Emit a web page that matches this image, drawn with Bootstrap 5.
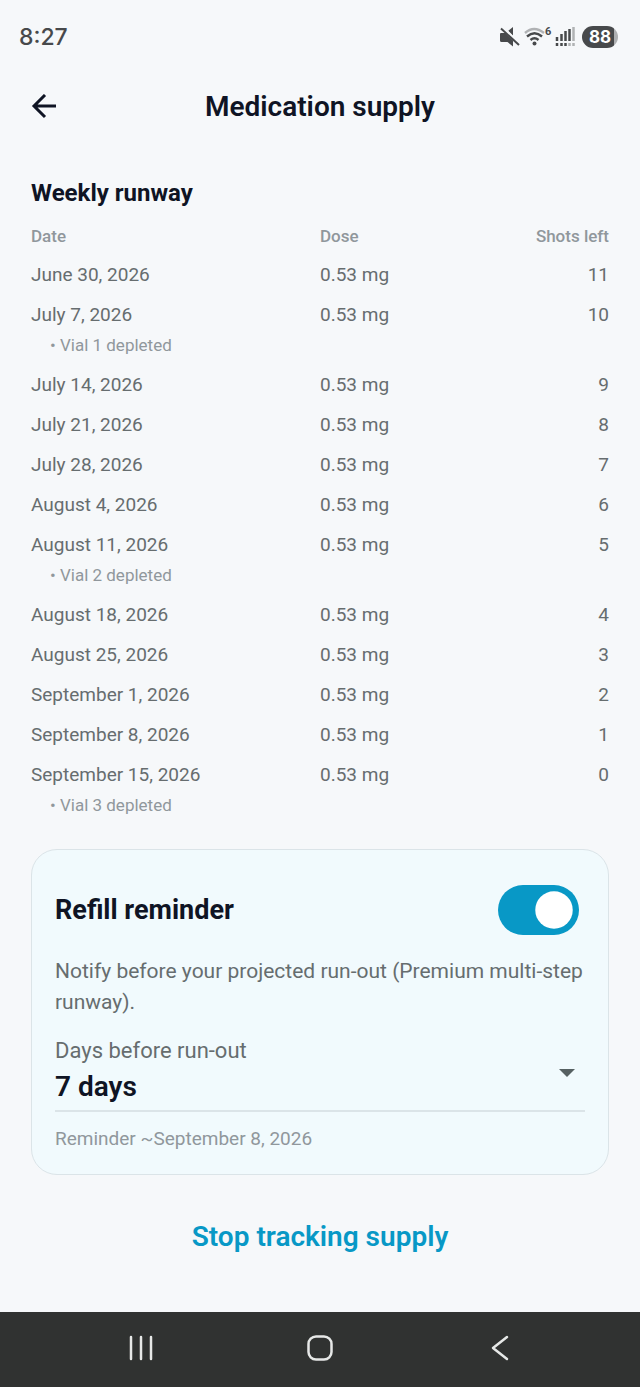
<!DOCTYPE html>
<html lang="en">
<head>
<meta charset="utf-8">
<meta name="viewport" content="width=device-width, initial-scale=1">
<title>Medication supply</title>
<link href="https://cdn.jsdelivr.net/npm/bootstrap@5.3.0/dist/css/bootstrap.min.css" rel="stylesheet">
<style>
  :root { --ink: #0f1424; --body: #666d6f; --faint: #90979c; --accent: #0898c6; --line: #dbe4e8; }
  body { font-family: Roboto, "Liberation Sans", sans-serif; background: #f6f8fa; color: var(--ink); }
  .status-bar { height: 74px; padding: 0 22px 0 19px; color: #47494b; }
  .clock { font: 500 23px/32px Inter, Roboto, sans-serif; }
  .status-icons { gap: 3px; }
  .wifi-gen { width: 7px; font: 700 11px/12px Roboto, sans-serif; }
  .battery { width: 36px; height: 22px; border-radius: 11px; font: 700 17px/22px Inter, Roboto, sans-serif;
             color: #fff; background: linear-gradient(90deg, #47494b 90%, #aeb0b2 90%); }
  .app-bar { display: grid; grid-template-columns: 48px 1fr 48px; height: 66px; padding: 0 20px; }
  .app-title, .stop-btn { font-size: 28px; line-height: 36px; font-weight: 600; }
  .content { padding: 36px 31px 0; }
  .section-title { font-size: 24px; line-height: 34px; font-weight: 700; }
  .runway { table-layout: fixed; }
  .runway th { height: 45px; font-size: 17px; font-weight: 500; color: var(--faint); }
  .runway td { height: 40px; font-size: 19px; line-height: 28px; color: var(--body); }
  .runway th, .runway td { padding: 0; vertical-align: middle; }
  .runway thead th { padding-top: 8px; }
  .runway .note td { height: 30px; padding: 0 0 10px 19px; font-size: 17px; line-height: 20px; color: var(--faint); }
  .refill { margin-top: 24px; padding: 35px 23px 22px; border: 1px solid var(--line); border-radius: 26px; background: #f1fafd; }
  .refill-title { font-size: 27px; line-height: 36px; font-weight: 700; }
  .form-switch .form-check-input.refill-toggle { width: 81px; height: 50px; margin: 0 6px 0 0; border: 0; border-radius: 25px; }
  .refill-toggle:checked { background-color: var(--accent); }
  .refill-text { margin-top: 21px; font-size: 21px; line-height: 31px; color: var(--body); }
  .days-field { margin-top: 20px; border-bottom: 2px solid var(--line); }
  .days-label { font-size: 22px; line-height: 26px; color: var(--body); }
  .days-select { appearance: none; background: none; border: 0; padding: 0; font-size: 28px; line-height: 46px; font-weight: 600; color: var(--ink); }
  .caret { right: 10px; top: 31px; pointer-events: none; }
  .reminder { margin-top: 14px; font-size: 19px; line-height: 26px; color: var(--faint); }
  .stop-btn { color: var(--accent); margin: 38px 0 42px; padding: 6px 16px; border: 0; }
  .sys-nav { height: 75px; padding: 0 50px 4px; background: #303231; }
  .sys-nav .btn { border: 0; }
</style>
</head>
<body>
<div class="d-flex flex-column min-vh-100">
  <div class="status-bar d-flex align-items-center justify-content-between">
    <span class="clock">8:27</span>
    <div class="status-icons d-flex align-items-center">
      <svg width="22" height="22" viewBox="0 0 22 22" fill="#47494b" aria-label="Muted"><path d="M2 7h5l7 7v6.500L8.500 16H2.500Q1 16 1 14.500V8q0-1 1-1zM9 5l5-4v9z"/><path d="M3 1l18 18" stroke="#f6f8fa" stroke-width="3.500"/><path d="M2 2.500l18 16.500" stroke="#47494b" stroke-width="2"/></svg>
      <div class="d-flex">
        <svg width="21" height="22" viewBox="0 0 21 22" fill="none" stroke="#47494b" stroke-width="2.400" aria-label="Wi-Fi"><path d="M1 7Q10-1 20 7" stroke="#b0b2b4"/><path d="M3 10.500q7.500-6.500 15 0M6.500 14q4-3.500 8 0"/><circle cx="10.500" cy="17.500" r="2" fill="#47494b" stroke="none"/></svg>
        <span class="wifi-gen">6</span>
      </div>
      <svg width="20" height="22" viewBox="0 0 20 22" fill="none" stroke-width="2.500" stroke="#47494b" aria-label="Signal"><path d="M2 11v4M6.500 8v7M10.500 5v10M14.500 3v12M2 17v3M6.500 17v3M10.500 17v3"/><path d="M18.500 1v14M14.500 17v3M18.500 17v3" stroke="#b0b2b4"/></svg>
      <span class="battery text-center ms-1">88</span>
    </div>
  </div>

  <header class="app-bar align-items-center">
    <button class="btn p-0 border-0 d-flex justify-content-center" type="button" aria-label="Back">
      <svg width="26" height="26" viewBox="0 0 26 26" fill="none" stroke="#0f1424" stroke-width="3"><path d="M14 1L3 12l11 11M3 12h22"/></svg>
    </button>
    <h1 class="app-title text-center m-0">Medication supply</h1>
  </header>

  <main class="content flex-grow-1">
    <h2 class="section-title m-0">Weekly runway</h2>
    <table class="runway w-100">
      <colgroup><col class="w-50"><col class="w-25"><col class="w-25"></colgroup>
      <thead><tr><th>Date</th><th>Dose</th><th class="text-end">Shots left</th></tr></thead>
      <tbody>
        <tr><td>June 30, 2026</td><td>0.53 mg</td><td class="text-end">11</td></tr>
        <tr><td>July 7, 2026</td><td>0.53 mg</td><td class="text-end">10</td></tr>
        <tr class="note"><td colspan="3">• Vial 1 depleted</td></tr>
        <tr><td>July 14, 2026</td><td>0.53 mg</td><td class="text-end">9</td></tr>
        <tr><td>July 21, 2026</td><td>0.53 mg</td><td class="text-end">8</td></tr>
        <tr><td>July 28, 2026</td><td>0.53 mg</td><td class="text-end">7</td></tr>
        <tr><td>August 4, 2026</td><td>0.53 mg</td><td class="text-end">6</td></tr>
        <tr><td>August 11, 2026</td><td>0.53 mg</td><td class="text-end">5</td></tr>
        <tr class="note"><td colspan="3">• Vial 2 depleted</td></tr>
        <tr><td>August 18, 2026</td><td>0.53 mg</td><td class="text-end">4</td></tr>
        <tr><td>August 25, 2026</td><td>0.53 mg</td><td class="text-end">3</td></tr>
        <tr><td>September 1, 2026</td><td>0.53 mg</td><td class="text-end">2</td></tr>
        <tr><td>September 8, 2026</td><td>0.53 mg</td><td class="text-end">1</td></tr>
        <tr><td>September 15, 2026</td><td>0.53 mg</td><td class="text-end">0</td></tr>
        <tr class="note"><td colspan="3">• Vial 3 depleted</td></tr>
      </tbody>
    </table>

    <section class="refill">
      <div class="form-check form-switch d-flex align-items-center justify-content-between p-0 m-0">
        <label class="refill-title" for="refill">Refill reminder</label>
        <input class="form-check-input refill-toggle" type="checkbox" role="switch" id="refill" checked>
      </div>
      <p class="refill-text mb-0">Notify before your projected run-out (Premium multi-step runway).</p>
      <div class="days-field position-relative">
        <label class="days-label d-block" for="days">Days before run-out</label>
        <select class="days-select d-block w-100" id="days"><option>7 days</option><option>14 days</option></select>
        <svg class="caret position-absolute" width="16" height="8" viewBox="0 0 16 8" fill="#566062" aria-hidden="true"><path d="M0 0h16L8 8z"/></svg>
      </div>
      <p class="reminder mb-0">Reminder ~September 8, 2026</p>
    </section>

    <div class="text-center">
      <button class="btn stop-btn" type="button">Stop tracking supply</button>
    </div>
  </main>

  <nav class="sys-nav d-flex align-items-center" aria-label="System navigation">
    <div class="col text-center"><button class="btn p-0" type="button" aria-label="Recent apps"><svg width="26" height="26" viewBox="0 0 26 26" stroke="#e6e8e7" stroke-width="2.500" stroke-linecap="round"><path d="M4 2v22M14 2v22M24 2v22"/></svg></button></div>
    <div class="col text-center"><button class="btn p-0" type="button" aria-label="Home"><svg width="26" height="26" viewBox="0 0 26 26" fill="none" stroke="#e6e8e7" stroke-width="2.500"><rect x="1.500" y="1.500" width="23" height="23" rx="7.500"/></svg></button></div>
    <div class="col text-center"><button class="btn p-0" type="button" aria-label="Back"><svg width="26" height="26" viewBox="0 0 26 26" fill="none" stroke="#e6e8e7" stroke-width="2.500" stroke-linecap="round" stroke-linejoin="round"><path d="M20 2L6 13l14 11"/></svg></button></div>
  </nav>
</div>
<script src="https://cdn.jsdelivr.net/npm/bootstrap@5.3.0/dist/js/bootstrap.bundle.min.js"></script>
</body>
</html>
